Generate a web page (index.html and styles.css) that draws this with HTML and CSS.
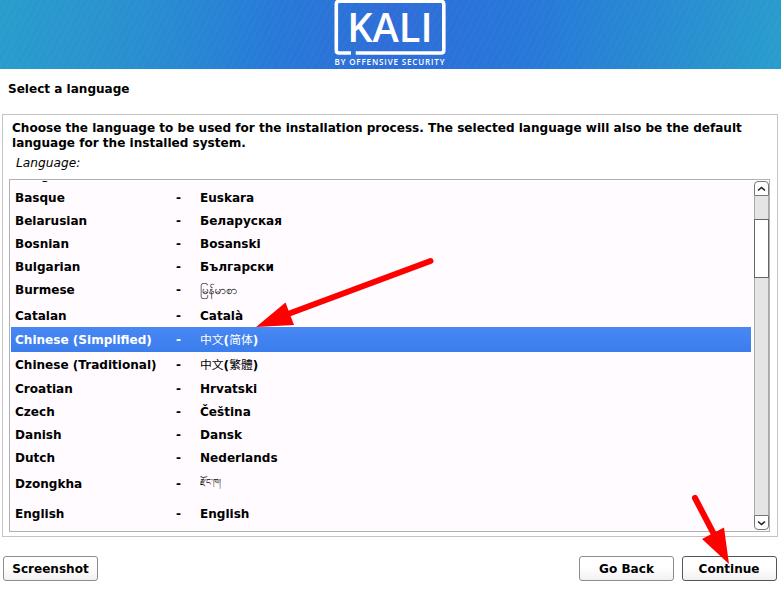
FILE: index.html
```html
<!DOCTYPE html>
<html lang="en">
<head>
<meta charset="utf-8">
<title>Select a language</title>
<link rel="stylesheet" href="styles.css">
</head>
<body>
<header class="banner">
  <svg class="logo" width="121" height="69" viewBox="0 0 121 69">
    <path d="M21 53H9Q6.300 53 6.300 50.300V4Q6.300 1.300 9 1.300H111Q113.800 1.300 113.800 4V50.300Q113.800 53 111 53H25.700" fill="none" stroke="#fff" stroke-width="3.600"/>
    <text class="logo-name" x="17.200" y="41.500" textLength="85.400" lengthAdjust="spacingAndGlyphs">KALI</text>
    <text class="logo-by" x="4.500" y="64.500" textLength="110">BY OFFENSIVE SECURITY</text>
  </svg>
</header>
<h1 class="title">Select a language</h1>
<main class="panel">
  <p class="intro">Choose the language to be used for the installation process. The selected language will also be the default language for the installed system.</p>
  <p class="label">Language:</p>
  <div class="listbox">
    <div class="list">
      <div class="row first"><span>Bangla</span></div>
      <div class="row"><span>Basque</span><span>-</span><span>Euskara</span></div>
      <div class="row"><span>Belarusian</span><span>-</span><span>Беларуская</span></div>
      <div class="row"><span>Bosnian</span><span>-</span><span>Bosanski</span></div>
      <div class="row"><span>Bulgarian</span><span>-</span><span>Български</span></div>
      <div class="row burmese"><span>Burmese</span><span>-</span><span class="native-my" lang="my">မြန်မာစာ</span></div>
      <div class="row"><span>Catalan</span><span>-</span><span>Català</span></div>
      <div class="row cjk selected"><span>Chinese (Simplified)</span><span>-</span><span lang="zh-CN"><i>中文</i>(<i>简体</i>)</span></div>
      <div class="row cjk"><span>Chinese (Traditional)</span><span>-</span><span lang="zh-TW"><i>中文</i>(<i>繁體</i>)</span></div>
      <div class="row"><span>Croatian</span><span>-</span><span>Hrvatski</span></div>
      <div class="row"><span>Czech</span><span>-</span><span>Čeština</span></div>
      <div class="row"><span>Danish</span><span>-</span><span>Dansk</span></div>
      <div class="row"><span>Dutch</span><span>-</span><span>Nederlands</span></div>
      <div class="row dzongkha"><span>Dzongkha</span><span>-</span><span class="native-dz" lang="dz">རྫོང་ཁ།</span></div>
      <div class="row"><span>English</span><span>-</span><span>English</span></div>
    </div>
    <div class="scrollbar">
      <div class="step up"><svg width="9" height="6" viewBox="0 0 9 6"><path d="M1 4.500 4.500 1.500 8 4.500"/></svg></div>
      <div class="track"><div class="thumb"></div></div>
      <div class="step down"><svg width="9" height="6" viewBox="0 0 9 6"><path d="M1 1.500 4.500 4.500 8 1.500"/></svg></div>
    </div>
  </div>
</main>
<footer class="actions">
  <button class="btn">Screenshot</button>
  <button class="btn back">Go Back</button>
  <button class="btn primary">Continue</button>
</footer>
<svg class="arrows" width="781" height="589" viewBox="0 0 781 589">
  <path class="shaft" d="M430.500 261 284 315.500M695 498 717 540"/>
  <path class="head" d="M256 327 285.500 302.500 294 325ZM729 564 702 539 724 527.500Z"/>
</svg>
</body>
</html>
```
FILE: styles.css
```css
* { box-sizing: border-box; }
body {
  margin: 0;
  width: 781px;
  height: 589px;
  overflow: hidden;
  position: relative;
  background: #fff;
  color: #000;
  font: bold 12.05px/15px "DejaVu Sans", "Noto Sans CJK SC", sans-serif;
}
.banner {
  height: 69px;
  display: flex;
  justify-content: center;
  background:
    repeating-linear-gradient(118deg, rgba(255,255,255,.02) 0 2px, transparent 2px 6px),
    linear-gradient(97deg, #299dcc 0, #298fd0 18%, #2779d8 36%, #2f6dd8 50%, #2777d9 66%, #2889d2 82%, #299dcc 100%);
}
.logo { display: block; }
.logo-name { font: 600 40px "Open Sans", sans-serif; fill: #fff; }
.logo-by { font: 600 8px "Open Sans", sans-serif; fill: #fff; }
.title { margin: 13px 0 0 8px; font-size: inherit; line-height: 15px; }
.panel {
  margin: 17px 3px 0 2px;
  height: 423px;
  padding: 6px 7px 4px 6px;
  border: 1px solid #c4c4c4;
}
.intro { margin: 0 20px 0 3px; }
.label { margin: 5px 0 8px 7px; font-weight: normal; font-style: italic; font-size: 12.2px; }
.listbox {
  height: 353px;
  display: flex;
  border: 1px solid #b0b0b0;
  background: #fffbff;
  padding: 1px 0 1px 1px;
}
.list { flex: 1; overflow: hidden; }
.row {
  height: 23px;
  padding: 2px 0 0 4px;
  display: grid;
  grid-template-columns: 161px 24px 1fr;
  align-items: center;
  white-space: nowrap;
}
.row.first { margin-top: -18px; }
.row i { font-style: normal; font-weight: normal; font-size: 11.8px; }
.row.burmese { height: 26px; padding-bottom: 3px; }
.row.cjk { height: 25px; }
.row.dzongkha { height: 33px; padding-bottom: 4px; }
.native-my { font-weight: normal; font-size: 11.6px; text-rendering: geometricPrecision; }
.native-dz { font-weight: normal; font-size: 8.5px; padding-bottom: 4px; }
.selected { background: linear-gradient(#4888f4, #3c7ded); color: #fff; }
.scrollbar { width: 15px; margin: 0 0 0 3px; display: flex; flex-direction: column; }
.step {
  height: 15px;
  display: flex;
  align-items: center;
  justify-content: center;
  border: 1px solid #777;
  background: #fff;
}
.step path { fill: none; stroke: #222; stroke-width: 1.6; }
.up { border-radius: 4px 4px 0 0; }
.down { border-radius: 0 0 4px 4px; }
.track { flex: 1; background: #e5e5e5; border: solid #aaa; border-width: 0 1px; padding-top: 23px; }
.thumb { height: 59px; margin: 0 -1px; border: 1px solid #666; background: #fff; }
.actions { display: flex; gap: 8px; padding: 19px 4px 0 3px; }
.btn {
  width: 95px;
  height: 25px;
  padding: 1px 0 0;
  border: 1px solid #8c8c8c;
  border-radius: 3px;
  background: linear-gradient(#fff 45%, #f3f0f3);
  color: #000;
  font: inherit;
}
.back { margin-left: auto; }
.primary { border-color: #555; padding-right: 1px; }
.arrows { position: absolute; left: 0; top: 0; pointer-events: none; }
.shaft { fill: none; stroke: #f00; stroke-width: 6; stroke-linecap: round; }
.head { fill: #f00; }
```
